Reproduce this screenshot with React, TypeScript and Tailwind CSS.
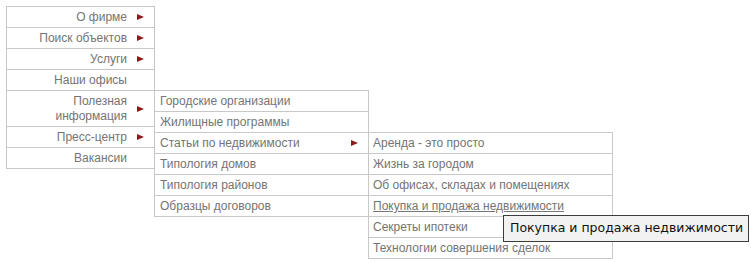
import React from "react";

const Arrow = () => (
  <svg width="7" height="6" viewBox="0 0 7 6" className="block">
    <path d="M0 0L7 3L0 6Z" fill="#8b1a1a" />
  </svg>
);

const l1 = [
  { t: ["О фирме"], a: true },
  { t: ["Поиск объектов"], a: true },
  { t: ["Услуги"], a: true },
  { t: ["Наши офисы"], a: false },
  { t: ["Полезная", "информация"], a: true, open: true },
  { t: ["Пресс-центр"], a: true },
  { t: ["Вакансии"], a: false },
];

const l2 = [
  { t: "Городские организации" },
  { t: "Жилищные программы" },
  { t: "Статьи по недвижимости", a: true, open: true },
  { t: "Типология домов" },
  { t: "Типология районов" },
  { t: "Образцы договоров" },
];

const l3 = [
  { t: "Аренда - это просто" },
  { t: "Жизнь за городом" },
  { t: "Об офисах, складах и помещениях" },
  { t: "Покупка и продажа недвижимости", hover: true },
  { t: "Секреты ипотеки" },
  { t: "Технологии совершения сделок" },
];

function L3() {
  return (
    <div className="absolute left-full -top-px w-[245px] border border-[#c8c8c8] bg-white">
      {l3.map((r, i) => (
        <div
          key={i}
          className={`relative flex items-center h-[20px] pl-[4px] ${i < l3.length - 1 ? "border-b border-[#c8c8c8] box-content" : ""}`}
        >
          <span className={r.hover ? "underline decoration-[#777]" : ""}>{r.t}</span>
        </div>
      ))}
    </div>
  );
}

function L2() {
  return (
    <div className="absolute left-full -top-px w-[215px] border border-[#c8c8c8] bg-white">
      {l2.map((r, i) => (
        <div
          key={i}
          className={`relative flex items-center justify-between h-[20px] pl-[5px] pr-[10px] ${i < l2.length - 1 ? "border-b border-[#c8c8c8] box-content" : ""}`}
        >
          <span>{r.t}</span>
          {r.a && <Arrow />}
          {r.open && <L3 />}
        </div>
      ))}
    </div>
  );
}

export default function App() {
  return (
    <div
      className="relative w-[751px] h-[263px] bg-white overflow-hidden text-[12px] text-[#747474]"
      style={{ fontFamily: '"Liberation Sans", Arial, sans-serif' }}
    >
      <div className="pt-[6px] pl-[6px]">
        <div className="relative w-[149px] border border-[#c8c8c8] bg-white">
          {l1.map((r, i) => (
            <div
              key={i}
              className={`relative flex items-center justify-end ${i < l1.length - 1 ? "border-b border-[#c8c8c8]" : ""}`}
            >
              <div className="text-right leading-[15px] pt-[3px] pb-[2px]">
                {r.t.map((line, j) => (
                  <div key={j}>{line}</div>
                ))}
              </div>
              <div className="w-[27px] flex justify-center">{r.a && <Arrow />}</div>
              {r.open && <L2 />}
            </div>
          ))}
        </div>
      </div>
      <div
        className="absolute left-[503px] top-[215px] w-[246px] h-[27px] border border-[#3c3c3c] bg-[#f2f2f2] text-[#111] text-[12.5px] flex items-center pl-[6px] whitespace-nowrap overflow-hidden"
        style={{ fontFamily: '"DejaVu Sans", Verdana, sans-serif' }}
      >
        Покупка и продажа недвижимости
      </div>
    </div>
  );
}
